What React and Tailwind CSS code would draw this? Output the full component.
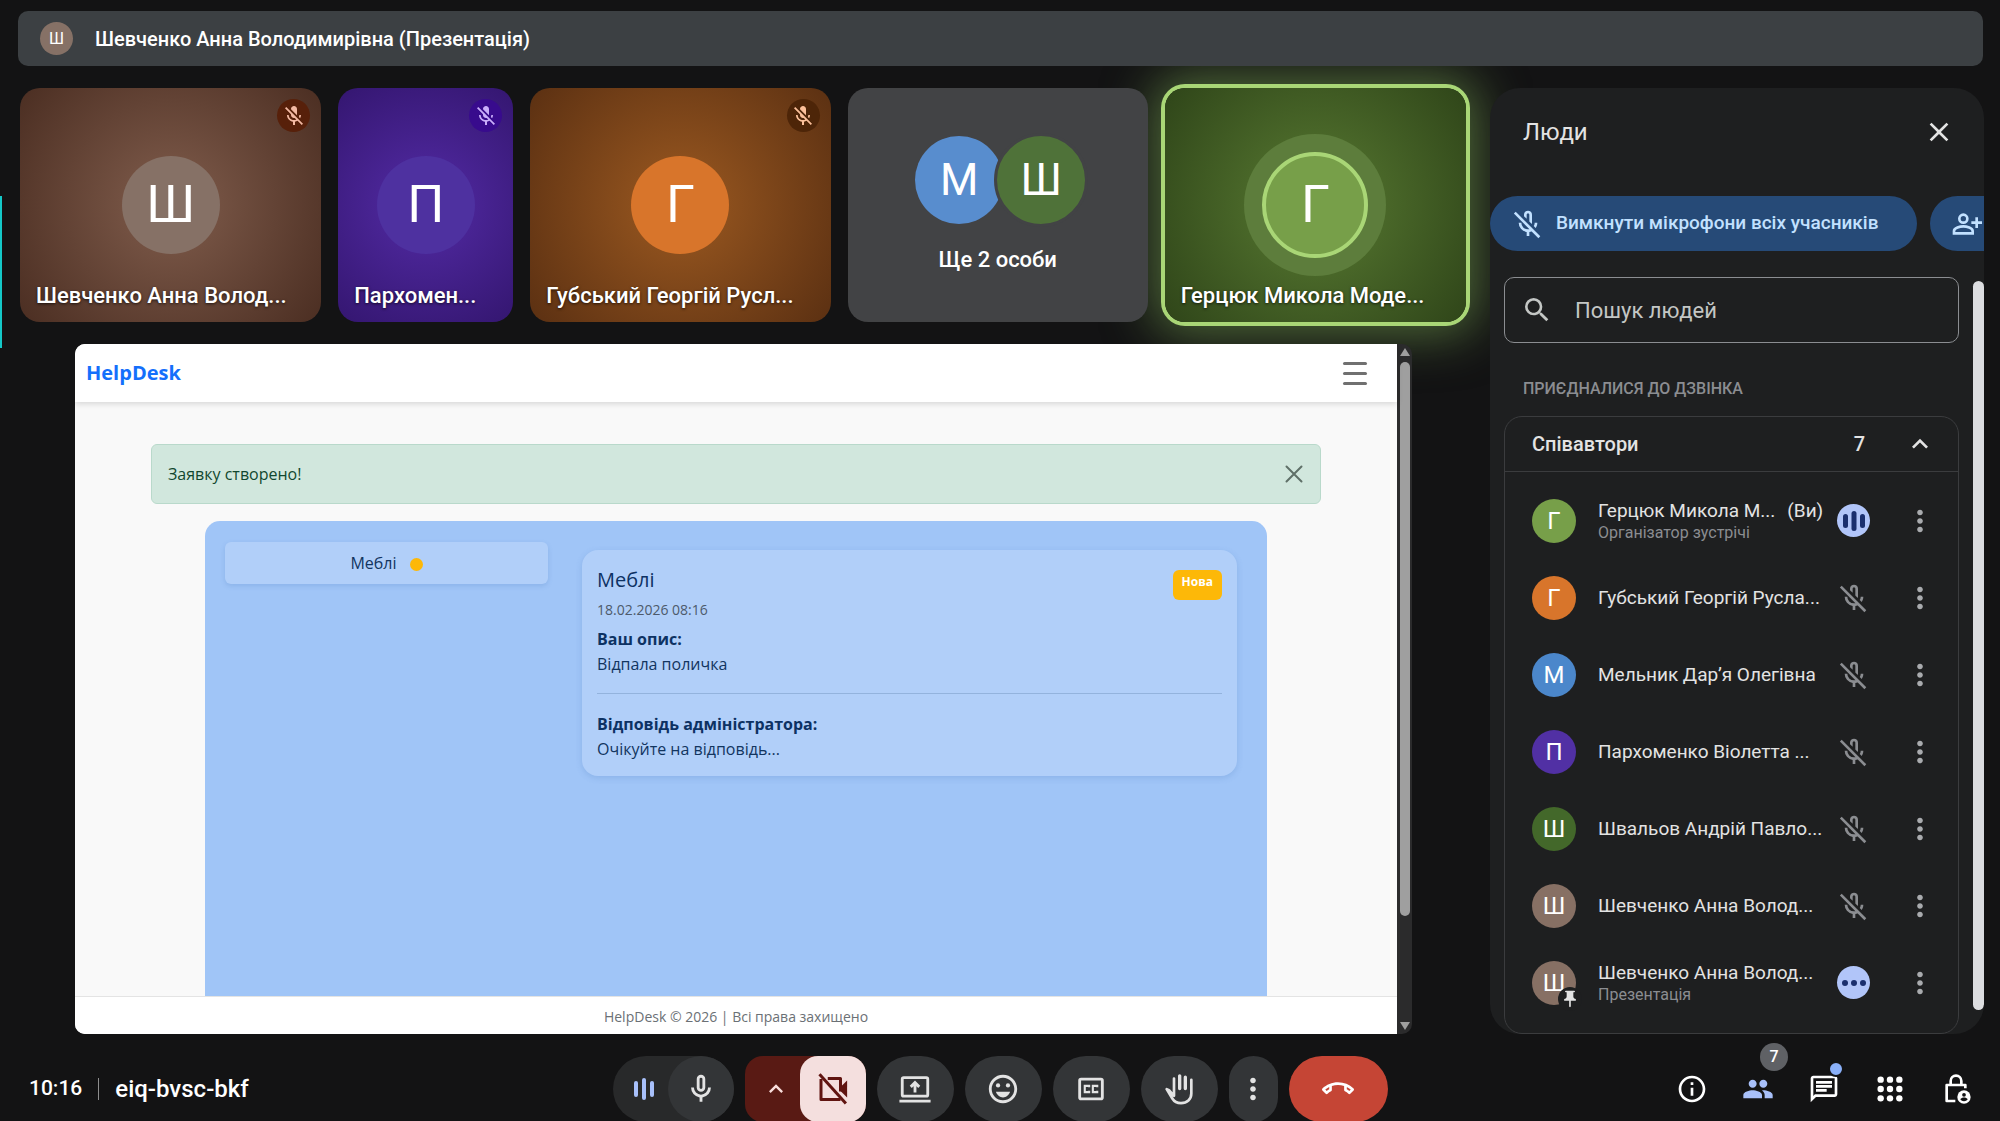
import {
  MdOutlineEmojiEmotions,
  MdMoreVert,
  MdOutlineCallEnd,
  MdInfoOutline,
  MdPeople,
  MdOutlineChat,
  MdSearch,
  MdClose,
  MdKeyboardArrowUp,
  MdPushPin,
} from "react-icons/md";

const MIC =
  "M480-400q-50 0-85-35t-35-85v-240q0-50 35-85t85-35q50 0 85 35t35 85v240q0 50-35 85t-85 35Zm0-240Zm-40 520v-123q-104-14-172-93t-68-184h80q0 83 58.5 141.5T480-320q83 0 141.5-58.5T680-520h80q0 105-68 184t-172 93v123h-80Zm40-360q17 0 28.5-11.5T520-520v-240q0-17-11.5-28.5T480-800q-17 0-28.5 11.5T440-760v240q0 17 11.5 28.5T480-480Z";
const MIC_OFF =
  "m710-362-58-58q14-23 21-48t7-52h80q0 44-13 83.5T710-362ZM480-594Zm112 112-72-72v-206q0-17-11.5-28.5T480-800q-17 0-28.5 11.5T440-760v126l-80-80v-46q0-50 35-85t85-35q50 0 85 35t35 85v240q0 11-2.5 20t-5.5 18ZM440-120v-123q-104-14-172-93t-68-184h80q0 83 57.5 141.5T480-320q34 0 64.5-10.5T600-360l57 57q-29 23-63.5 39T520-243v123h-80Zm352 64L56-792l56-56 736 736-56 56Z";

function Symbol({ d, className }) {
  return (
    <svg viewBox="0 -960 960 960" fill="currentColor" aria-hidden="true" className={className}>
      <path d={d} />
    </svg>
  );
}

function MicOffFilled({ className }) {
  return (
    <svg viewBox="0 0 24 24" fill="currentColor" aria-hidden="true" className={className}>
      <path d="M19 11h-1.7c0 .74-.16 1.43-.43 2.05l1.23 1.23c.56-.98.9-2.09.9-3.28zm-4.02.17c0-.06.02-.11.02-.17V5c0-1.66-1.34-3-3-3S9 3.34 9 5v.18l5.98 5.99zM4.27 3L3 4.27l6.01 6.01V11c0 1.66 1.33 3 2.99 3 .22 0 .44-.03.65-.08l1.66 1.66c-.71.33-1.5.52-2.31.52-2.76 0-5.3-2.1-5.3-5.1H5c0 3.41 2.72 6.23 6 6.72V21h2v-3.28c.91-.13 1.77-.45 2.54-.9L19.73 21 21 19.73 4.27 3z" />
    </svg>
  );
}

function CamOffIcon({ className }) {
  return (
    <svg viewBox="0 0 24 24" aria-hidden="true" className={className}>
      <path d="M8.5 5H17v8.6M17 19H4V5.4" fill="none" stroke="currentColor" strokeWidth="2" strokeLinejoin="round" />
      <path d="M17 10.6l4.4-4.2v11.2L17 13.4z" fill="currentColor" />
      <path d="M3 2.2L20.6 21.6" fill="none" stroke="currentColor" strokeWidth="2" />
    </svg>
  );
}

function PresentIcon({ className }) {
  return (
    <svg viewBox="0 0 24 24" fill="none" stroke="currentColor" strokeWidth="2" aria-hidden="true" className={className}>
      <rect x="3" y="4" width="18" height="13" rx="1" />
      <path d="M1 20.5h22M12 14.5V8M9 10.5l3-3 3 3" />
    </svg>
  );
}

function CaptionsIcon({ className }) {
  return (
    <svg viewBox="0 0 24 24" fill="none" stroke="currentColor" aria-hidden="true" className={className}>
      <rect x="4" y="5" width="16" height="14" rx="1" strokeWidth="2" />
      <path d="M10.7 10.8V9.8H7.6v4.4h3.1v-1M16.4 10.8V9.8h-3.1v4.4h3.1v-1" strokeWidth="1.5" />
    </svg>
  );
}

function HandIcon({ className }) {
  return (
    <svg viewBox="0 0 84 92" fill="none" stroke="currentColor" strokeWidth="8" strokeLinecap="round" strokeLinejoin="round" aria-hidden="true" className={className}>
      <path d="M44 5v38M61 9v34" strokeWidth="10" />
      <path d="M27 13v52L12 48l-7-3 17 28c6 10 14 14 26 14 18 0 31-12 31-29V17" />
    </svg>
  );
}

function AppsIcon({ className }) {
  return (
    <svg viewBox="0 0 24 24" fill="currentColor" aria-hidden="true" className={className}>
      {[5, 12, 19].map((y) => [5, 12, 19].map((x) => <circle key={x + "-" + y} cx={x} cy={y} r="2.4" />))}
    </svg>
  );
}

function PersonAddIcon({ className }) {
  return (
    <svg viewBox="0 0 24 24" fill="none" stroke="currentColor" strokeWidth="2" aria-hidden="true" className={className}>
      <circle cx="10" cy="8" r="3" />
      <path d="M3 19v-1.800c0-2.200 4.600-3.400 7-3.400s7 1.200 7 3.400V19zM20 7v8M16 11h8" />
    </svg>
  );
}

function LockPersonIcon({ className }) {
  return (
    <svg viewBox="0 0 24 24" fill="none" stroke="currentColor" strokeWidth="2" aria-hidden="true" className={className}>
      <path d="M11.500 21H5V9h14v2.500M8 9V6a4 4 0 0 1 8 0v3" strokeLinejoin="round" />
      <circle cx="18" cy="18" r="5" fill="currentColor" stroke="none" />
      <circle cx="18" cy="16.400" r="1.400" fill="#131314" stroke="none" />
      <path d="M15.200 19.600c.6-.9 1.700-1.300 2.800-1.300s2.200.4 2.800 1.300c-.6.9-1.700 1.500-2.800 1.500s-2.200-.6-2.800-1.500z" fill="#131314" stroke="none" />
    </svg>
  );
}

function AudioBars({ className }) {
  return (
    <svg viewBox="0 0 24 24" fill="currentColor" aria-hidden="true" className={className}>
      <rect x="1" y="5" width="5" height="14" rx="2.500" />
      <rect x="9.500" y="2" width="5" height="20" rx="2.500" />
      <rect x="18" y="5" width="5" height="14" rx="2.500" />
    </svg>
  );
}

function Tile({ name, letter, bg, avatar, badge }) {
  return (
    <article className={"relative flex flex-col items-center justify-center overflow-hidden rounded-[20px] " + bg}>
      <div className={"flex size-[98px] items-center justify-center rounded-full text-[52px] text-white " + avatar}>
        {letter}
      </div>
      <span className={"absolute top-[11px] right-[11px] flex size-[33px] items-center justify-center rounded-full " + badge}>
        <MicOffFilled className="size-6" />
      </span>
      <p className="absolute bottom-[11px] left-4 text-[22px] leading-[30px] font-medium whitespace-nowrap text-white [text-shadow:0_1px_3px_rgb(0_0_0/0.7)]">
        {name}
      </p>
    </article>
  );
}

function Tiles() {
  return (
    <section className="grid h-[234px] shrink-0 grid-cols-[301fr_175fr_300fr_300fr_301fr] gap-[17px]">
      <Tile
        name="Шевченко Анна Волод..."
        letter="Ш"
        bg="bg-[radial-gradient(circle_at_center,#7b5848_10%,#4b2e22_100%)]"
        avatar="bg-[#867166]"
        badge="bg-[#57200a] text-[#f3b9a3]"
      />
      <Tile
        name="Пархомен..."
        letter="П"
        bg="bg-[radial-gradient(circle_at_center,#5029a0_10%,#341670_100%)]"
        avatar="bg-[#4e31a0]"
        badge="bg-[#380b8d] text-[#c9aefb]"
      />
      <Tile
        name="Губський Георгій Русл..."
        letter="Г"
        bg="bg-[radial-gradient(circle_at_center,#95551f_10%,#5b3012_100%)]"
        avatar="bg-[#d8752b]"
        badge="bg-[#4d2508] text-[#fbc09a]"
      />
      <article className="relative z-10 flex flex-col items-center rounded-[20px] bg-[#424345] pt-12">
        <div className="flex pl-2 text-[44px] leading-none text-white">
          <span className="flex size-[88px] items-center justify-center rounded-full bg-[#588dce]">М</span>
          <span className="-my-[3px] -ml-[9px] flex size-[94px] items-center justify-center rounded-full border-3 border-[#424345] bg-[#4f7239]">
            Ш
          </span>
        </div>
        <p className="mt-[21px] text-[22px] leading-[30px] font-medium text-white">Ще 2 особи</p>
      </article>
      <article className="relative flex items-center justify-center rounded-[20px] bg-[radial-gradient(circle_at_center,#54752f_10%,#2f4519_100%)] shadow-[0_0_0_4px_#a9d676,0_0_50px_12px_rgb(120_165_80/0.6)]">
        <div className="flex size-[142px] items-center justify-center rounded-full bg-[#5d7d3c]">
          <div className="flex size-[106px] items-center justify-center rounded-full border-4 border-[#a9d676] bg-[#779f49] text-[52px] text-white">
            Г
          </div>
        </div>
        <p className="absolute bottom-[11px] left-4 text-[22px] leading-[30px] font-medium whitespace-nowrap text-white [text-shadow:0_1px_3px_rgb(0_0_0/0.7)]">
          Герцюк Микола Моде...
        </p>
      </article>
    </section>
  );
}

function HelpDesk() {
  return (
    <section className="relative mt-[22px] mr-[54px] ml-[55px] flex min-h-0 flex-1 overflow-hidden rounded-[10px] bg-[#2b2b2c] font-['Open_Sans',sans-serif]">
      <div className="flex flex-1 flex-col bg-[#f9f9f9] text-[#12355f]">
        <header className="z-10 flex h-[58px] shrink-0 items-center justify-between bg-white pr-[30px] pl-[11px] shadow-[0_2px_6px_rgb(0_0_0/0.14)]">
          <a href="#home" className="text-xl font-bold text-[#146ffb]">
            HelpDesk
          </a>
          <button aria-label="Меню" className="flex w-6 flex-col gap-[7px]">
            <span className="h-[3px] rounded bg-[#707070]" />
            <span className="h-[3px] rounded bg-[#707070]" />
            <span className="h-[3px] rounded bg-[#707070]" />
          </button>
        </header>
        <main className="flex min-h-0 flex-1 flex-col px-[76px] pt-[42px]">
          <div role="alert" className="flex h-[60px] shrink-0 items-center justify-between rounded-md border border-[#b9d9cb] bg-[#d1e7dd] pr-[17px] pl-4 text-[16px] text-[#11472f]">
            <span>Заявку створено!</span>
            <button aria-label="Закрити">
              <svg viewBox="0 0 18 18" className="size-[18px] text-[#5f7068]" fill="none" stroke="currentColor" strokeWidth="2" strokeLinecap="round">
                <path d="M1.500 1.500l15 15M16.500 1.500l-15 15" />
              </svg>
            </button>
          </div>
          <div className="mx-[54px] mt-[17px] flex min-h-0 flex-1 gap-[34px] rounded-t-[15px] bg-[#a0c5f7] pr-[30px] pl-5">
            <button className="mt-[21px] flex h-[42px] basis-[323px] items-center justify-center gap-[13px] rounded-md bg-[#b1cff9] text-[16px] shadow-[0_2px_5px_rgb(60_110_180/0.2)]">
              Меблі <span className="mt-0.5 size-[13px] rounded-full bg-[#fdb808]" />
            </button>
            <article className="mt-[29px] h-[226px] flex-1 rounded-2xl bg-[#b1cff9] px-[15px] pt-4 text-[16px] leading-[25px] shadow-[0_2px_6px_rgb(60_110_180/0.2)]">
              <div className="flex justify-between">
                <div>
                  <h2 className="text-xl leading-[28px] font-medium text-[#0d3263]">Меблі</h2>
                  <p className="mt-0.5 text-sm leading-[28px] text-[#4d5a6b]">18.02.2026 08:16</p>
                </div>
                <span className="mt-1 h-[30px] rounded-md bg-[#fdb808] px-[9px] text-xs leading-6 font-bold text-white">
                  Нова
                </span>
              </div>
              <h3 className="mt-[3px] font-bold text-[#0d3263]">Ваш опис:</h3>
              <p>Відпала поличка</p>
              <hr className="mt-4 mb-[18px] border-[#93b3dd]" />
              <h3 className="font-bold text-[#0d3263]">Відповідь адміністратора:</h3>
              <p>Очікуйте на відповідь...</p>
            </article>
          </div>
        </main>
        <footer className="h-[38px] shrink-0 border-t border-[#e4e4e4] bg-white text-center text-sm leading-[40px] text-[#6b7075]">
          HelpDesk © 2026 | Всі права захищено
        </footer>
      </div>
      <div className="flex w-[15px] shrink-0 flex-col items-center py-1">
        <svg viewBox="0 0 10 8" className="h-2 w-2.5 text-[#9f9f9f]" fill="currentColor">
          <path d="M5 0l5 8H0z" />
        </svg>
        <div className="mt-1.5 h-[554px] w-2.5 rounded-full bg-[#9f9f9f]" />
        <svg viewBox="0 0 10 8" className="mt-auto h-2 w-2.5 text-[#9f9f9f]" fill="currentColor">
          <path d="M5 8L0 0h10z" />
        </svg>
      </div>
    </section>
  );
}

const people = [
  { name: "Герцюк Микола М...", you: "(Ви)", note: "Організатор зустрічі", letter: "Г", color: "bg-[#779f49]", state: "speaking" },
  { name: "Губський Георгій Русла...", letter: "Г", color: "bg-[#d8752b]", state: "muted" },
  { name: "Мельник Дар’я Олегівна", letter: "М", color: "bg-[#4b87cb]", state: "muted" },
  { name: "Пархоменко Віолетта ...", letter: "П", color: "bg-[#5130a4]", state: "muted" },
  { name: "Швальов Андрій Павло...", letter: "Ш", color: "bg-[#43682a]", state: "muted" },
  { name: "Шевченко Анна Волод...", letter: "Ш", color: "bg-[#877064]", state: "muted" },
  { name: "Шевченко Анна Волод...", note: "Презентація", letter: "Ш", color: "bg-[#877064]", state: "sharing", pinned: true },
];

function Person({ p }) {
  return (
    <li className="flex h-[77px] items-center pr-[21px] pl-[27px]">
      <span className={"relative flex size-11 shrink-0 items-center justify-center rounded-full text-[24px] text-white " + p.color}>
        {p.letter}
        {p.pinned && (
          <span className="absolute -right-1.5 -bottom-1.5 flex size-6 items-center justify-center rounded-full bg-[#1e1f20]">
            <MdPushPin className="size-5 text-[#e3e3e3]" />
          </span>
        )}
      </span>
      <div className="ml-[22px] flex-1 whitespace-nowrap">
        <p className="flex text-[19px] leading-[24px] text-[#e3e3e3]">
          {p.name}
          {p.you && <span className="ml-3">{p.you}</span>}
        </p>
        {p.note && <p className="text-base leading-5 text-[#8b8d91]">{p.note}</p>}
      </div>
      <button aria-label="Мікрофон" className="flex size-[33px] shrink-0 items-center justify-center">
        {p.state === "muted" && <Symbol d={MIC_OFF} className="size-8 text-[#8b8d91]" />}
        {p.state === "speaking" && (
          <span className="flex size-[33px] items-center justify-center rounded-full bg-[#b1c5f9] text-[#1a2f6e]">
            <AudioBars className="size-6" />
          </span>
        )}
        {p.state === "sharing" && (
          <span className="flex size-[33px] items-center justify-center gap-[3px] rounded-full bg-[#b1c5f9]">
            <i className="size-1.5 rounded-full bg-[#1a2f6e]" />
            <i className="size-1.5 rounded-full bg-[#1a2f6e]" />
            <i className="size-1.5 rounded-full bg-[#1a2f6e]" />
          </span>
        )}
      </button>
      <button aria-label="Інші дії" className="ml-[33px] text-[#a9abae]">
        <MdMoreVert className="size-[34px]" />
      </button>
    </li>
  );
}

function PeoplePanel() {
  return (
    <aside className="relative ml-6 flex w-[494px] shrink-0 flex-col overflow-hidden rounded-[30px] bg-[#1e1f20]">
      <div className="flex h-[88px] shrink-0 items-center justify-between pr-[29px] pl-[33px] text-[#e3e3e3]">
        <h1 className="text-[24px]">Люди</h1>
        <button aria-label="Закрити">
          <MdClose className="size-8" />
        </button>
      </div>
      <div className="mt-5 flex h-[55px] shrink-0 gap-[13px] text-[19px] font-medium text-[#c2e1ff]">
        <button className="flex w-[427px] shrink-0 items-center rounded-full bg-[#264a77] pl-[22px] whitespace-nowrap">
          <Symbol d={MIC_OFF} className="mr-3 size-8" />
          Вимкнути мікрофони всіх учасників
        </button>
        <button aria-label="Додати людей" className="flex w-[240px] shrink-0 items-center rounded-full bg-[#264a77] pl-5">
          <PersonAddIcon className="size-8" />
        </button>
      </div>
      <div className="mt-[26px] flex min-h-0 flex-1 justify-between pl-3.5">
        <div className="flex w-[455px] flex-col">
          <label className="flex h-[66px] shrink-0 items-center rounded-[10px] border border-[#8b8d91] pl-4 text-[#c4c7c5]">
            <MdSearch className="size-8" />
            <input
              aria-label="Пошук людей"
              placeholder="Пошук людей"
              className="ml-[22px] w-[300px] bg-transparent text-[22px] outline-none placeholder:text-[#c4c7c5]"
            />
          </label>
          <h2 className="mt-[35px] ml-[19px] text-base leading-[22px] font-medium text-[#8b8d91]">ПРИЄДНАЛИСЯ ДО ДЗВІНКА</h2>
          <section className="mt-4 min-h-0 flex-1 rounded-[18px] border border-[#3b3c3e]">
            <div className="flex h-[55px] items-center border-b border-[#3b3c3e] pr-[22px] pl-[27px] text-[20px] font-medium text-[#e3e3e3]">
              <h3 className="flex-1">Співавтори</h3>
              <span className="mr-[39px]">7</span>
              <button aria-label="Згорнути">
                <MdKeyboardArrowUp className="size-8" />
              </button>
            </div>
            <ul className="pt-2.5">
              {people.map((p, i) => (
                <Person key={i} p={p} />
              ))}
            </ul>
          </section>
        </div>
        <div className="mt-1 mb-6 w-[11px] rounded-full bg-[#dcdde0]" />
      </div>
    </aside>
  );
}

function ControlBar() {
  return (
    <footer className="mt-[22px] grid h-[65px] shrink-0 grid-cols-[1fr_auto_1fr] items-center text-white">
      <div className="flex items-center pl-[29px] text-[22px] font-medium">
        <span className="text-[21px]">10:16</span>
        <span className="mx-4 h-[22px] w-px bg-[#8e8e8e]" />
        <span className="text-[24px]">eiq-bvsc-bkf</span>
      </div>
      <div className="flex h-[66px] gap-[11px] text-[#e3e3e3]">
        <div className="flex w-[121px] rounded-full bg-[#28292a]">
          <button aria-label="Налаштування звуку" className="flex flex-1 items-center justify-center pl-2 text-[#a8c0fa]">
            <svg viewBox="0 0 24 24" className="size-6" fill="currentColor">
              <rect x="2" y="4" width="4" height="16" rx="2" />
              <rect x="10" y="1" width="4" height="22" rx="2" />
              <rect x="18" y="4" width="4" height="16" rx="2" />
            </svg>
          </button>
          <button aria-label="Мікрофон" className="flex size-[66px] items-center justify-center rounded-full bg-[#333537]">
            <Symbol d={MIC} className="size-[34px]" />
          </button>
        </div>
        <div className="flex w-[121px] rounded-[18px] bg-[#591a14] text-[#f9dedc]">
          <button aria-label="Налаштування відео" className="flex flex-1 items-center justify-center pl-2">
            <MdKeyboardArrowUp className="size-7" />
          </button>
          <button aria-label="Камера" className="flex size-[66px] items-center justify-center rounded-[18px] bg-[#f4dfde] text-[#601410]">
            <CamOffIcon className="size-9" />
          </button>
        </div>
        <button aria-label="Показати екран" className="flex w-[77px] items-center justify-center rounded-full bg-[#333537]">
          <PresentIcon className="size-[34px]" />
        </button>
        <button aria-label="Реакції" className="flex w-[77px] items-center justify-center rounded-full bg-[#333537]">
          <MdOutlineEmojiEmotions className="size-[34px]" />
        </button>
        <button aria-label="Субтитри" className="flex w-[77px] items-center justify-center rounded-full bg-[#333537]">
          <CaptionsIcon className="size-[34px]" />
        </button>
        <button aria-label="Підняти руку" className="flex w-[77px] items-center justify-center rounded-full bg-[#333537]">
          <HandIcon className="h-[31px] w-7" />
        </button>
        <button aria-label="Інші опції" className="flex w-[49px] items-center justify-center rounded-full bg-[#333537]">
          <MdMoreVert className="size-[34px]" />
        </button>
        <button aria-label="Завершити" className="flex w-[99px] items-center justify-center rounded-full bg-[#c54535] text-white">
          <MdOutlineCallEnd className="size-8" />
        </button>
      </div>
      <div className="flex items-center justify-end gap-[34px] pr-7">
        <button aria-label="Інформація">
          <MdInfoOutline className="size-8" />
        </button>
        <button aria-label="Люди" className="relative text-[#a8c0fa]">
          <MdPeople className="size-8" />
          <span className="absolute -top-[30px] left-[18px] flex size-7 items-center justify-center rounded-full bg-[#5f6165] text-base font-medium text-white">
            7
          </span>
        </button>
        <button aria-label="Чат" className="relative">
          <MdOutlineChat className="size-8" />
          <span className="absolute -top-3 left-5 size-4 rounded-full border-2 border-[#131314] bg-[#8ab0f8]" />
        </button>
        <button aria-label="Дії">
          <AppsIcon className="size-8" />
        </button>
        <button aria-label="Керування">
          <LockPersonIcon className="size-8" />
        </button>
      </div>
    </footer>
  );
}

export default function App() {
  return (
    <div className="relative flex h-screen min-h-[900px] flex-col overflow-hidden bg-[#131314] pt-[11px] font-[Roboto,sans-serif]">
      <span className="absolute top-[196px] left-0 h-[152px] w-0.5 bg-[#14c8c8]" />
      <header className="z-10 mr-[17px] ml-[18px] flex h-[55px] shrink-0 items-center rounded-[10px] bg-[#3c4043] pl-[22px] text-white">
        <span className="flex size-[33px] items-center justify-center rounded-full bg-[#867166] text-base">Ш</span>
        <p className="ml-[22px] text-[20px] font-medium">Шевченко Анна Володимирівна (Презентація)</p>
      </header>
      <div className="mt-[22px] mr-4 ml-5 flex min-h-0 flex-1">
        <div className="flex min-w-0 flex-1 flex-col">
          <Tiles />
          <HelpDesk />
        </div>
        <PeoplePanel />
      </div>
      <ControlBar />
    </div>
  );
}
